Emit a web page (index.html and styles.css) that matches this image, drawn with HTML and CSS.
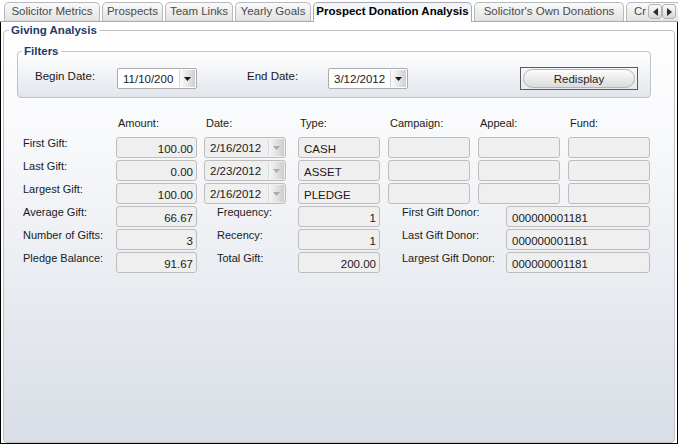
FILE: index.html
```html
<!DOCTYPE html>
<html lang="en">
  <head>
    <meta charset="UTF-8" />
    <meta name="viewport" content="width=device-width, initial-scale=1.0" />
    <title>Prospect Donation Analysis</title>

    <link rel="stylesheet" href="styles.css">
  </head>
  <body>
    <div class="window">
      <div class="tabs">
        <div class="tab t1">Solicitor Metrics</div>
        <div class="tab t2">Prospects</div>
        <div class="tab t3">Team Links</div>
        <div class="tab t4">Yearly Goals</div>
        <div class="tab t5 active">Prospect Donation Analysis</div>
        <div class="tab t6">Solicitor's Own Donations</div>
        <div class="tab t7">Cr</div>
        <div class="scroller">
          <span class="scroll-btn">
            <svg width="5" height="8" viewBox="0 0 5 8"><path d="M5 0V8L0 4Z" fill="#2a2a2a" /></svg>
          </span>
          <span class="scroll-btn">
            <svg width="5" height="8" viewBox="0 0 5 8"><path d="M0 0V8L5 4Z" fill="#2a2a2a" /></svg>
          </span>
        </div>
      </div>

      <div class="panel">
        <fieldset class="group main">
          <legend>Giving Analysis</legend>
          <div class="main-body">
            <fieldset class="group filters">
              <legend>Filters</legend>
              <div class="filter-row">
                <span class="flabel">Begin Date:</span>
                <div class="picker">
                  <span class="picker-text">11/10/200</span>
                  <span class="picker-btn">
                    <svg width="7" height="4" viewBox="0 0 7 4"><path d="M0 0H7L3.5 4Z" fill="#1a1a1a" /></svg>
                  </span>
                </div>
                <span class="flabel end">End Date:</span>
                <div class="picker">
                  <span class="picker-text">3/12/2012</span>
                  <span class="picker-btn">
                    <svg width="7" height="4" viewBox="0 0 7 4"><path d="M0 0H7L3.5 4Z" fill="#1a1a1a" /></svg>
                  </span>
                </div>
                <div class="btn-frame"><button class="btn">Redisplay</button></div>
              </div>
            </fieldset>

            <div class="gifts">
              <div class="row head">
                <span class="c-label"></span>
                <span class="c-amount">Amount:</span>
                <span class="c-date">Date:</span>
                <span class="c-type">Type:</span>
                <span class="c-camp">Campaign:</span>
                <span class="c-appeal">Appeal:</span>
                <span class="c-fund">Fund:</span>
              </div>

              <div class="row">
                <span class="c-label">First Gift:</span>
                <span class="box num c-amount">100.00</span>
                <span class="combo c-date">
                  <span class="combo-text">2/16/2012</span>
                  <span class="combo-btn"><svg width="7" height="4" viewBox="0 0 7 4"><path d="M0 0H7L3.5 4Z" fill="#a9a9a9" /></svg></span>
                </span>
                <span class="box c-type">CASH</span>
                <span class="box c-camp"></span>
                <span class="box c-appeal"></span>
                <span class="box c-fund"></span>
              </div>
              <div class="row">
                <span class="c-label">Last Gift:</span>
                <span class="box num c-amount">0.00</span>
                <span class="combo c-date">
                  <span class="combo-text">2/23/2012</span>
                  <span class="combo-btn"><svg width="7" height="4" viewBox="0 0 7 4"><path d="M0 0H7L3.5 4Z" fill="#a9a9a9" /></svg></span>
                </span>
                <span class="box c-type">ASSET</span>
                <span class="box c-camp"></span>
                <span class="box c-appeal"></span>
                <span class="box c-fund"></span>
              </div>
              <div class="row">
                <span class="c-label">Largest Gift:</span>
                <span class="box num c-amount">100.00</span>
                <span class="combo c-date">
                  <span class="combo-text">2/16/2012</span>
                  <span class="combo-btn"><svg width="7" height="4" viewBox="0 0 7 4"><path d="M0 0H7L3.5 4Z" fill="#a9a9a9" /></svg></span>
                </span>
                <span class="box c-type">PLEDGE</span>
                <span class="box c-camp"></span>
                <span class="box c-appeal"></span>
                <span class="box c-fund"></span>
              </div>

              <div class="row">
                <span class="c-label">Average Gift:</span>
                <span class="box num c-amount">66.67</span>
                <span class="c-sub">Frequency:</span>
                <span class="box num c-freq">1</span>
                <span class="c-donor-label">First Gift Donor:</span>
                <span class="box c-donor">000000001181</span>
              </div>
              <div class="row">
                <span class="c-label">Number of Gifts:</span>
                <span class="box num c-amount">3</span>
                <span class="c-sub">Recency:</span>
                <span class="box num c-freq">1</span>
                <span class="c-donor-label">Last Gift Donor:</span>
                <span class="box c-donor">000000001181</span>
              </div>
              <div class="row">
                <span class="c-label">Pledge Balance:</span>
                <span class="box num c-amount">91.67</span>
                <span class="c-sub">Total Gift:</span>
                <span class="box num c-freq">200.00</span>
                <span class="c-donor-label">Largest Gift Donor:</span>
                <span class="box c-donor">000000001181</span>
              </div>
            </div>
          </div>
        </fieldset>
      </div>
    </div>
  </body>
</html>
```

FILE: styles.css
```css
*,
*::before,
*::after {
  box-sizing: border-box;
  padding: 0;
  margin: 0;
}

body {
  background-color: #ffffff;
  font-family: "Liberation Sans", Arial, sans-serif;
  font-size: 11px;
  color: #1a1a1a;
}

.window {
  width: 678px;
  height: 444px;
  display: flex;
  flex-direction: column;
  overflow: hidden;
}

/* tab strip */
.tabs {
  position: relative;
  height: 22px;
  flex-shrink: 0;
  display: flex;
  align-items: flex-end;
  gap: 2px;
  padding-left: 4px;
  border-bottom: 1px solid #a7abb1;
}
.tab {
  flex-shrink: 0;
  height: 19px;
  line-height: 17px;
  text-align: center;
  white-space: nowrap;
  color: #4b4b4b;
  font-size: 11.5px;
  border: 1px solid #b7b9bd;
  border-bottom: none;
  border-radius: 5px 5px 0 0;
  background: linear-gradient(#fafafa, #e1e1e1);
}
.tab.active {
  height: 20px;
  margin-bottom: -1px;
  color: #000;
  font-weight: bold;
  background: linear-gradient(#f1f4f8, #ffffff);
  border-color: #a7abb1;
}
.t1 { width: 96px; }
.t2 { width: 61px; }
.t3 { width: 68px; }
.t4 { width: 76px; }
.t5 { width: 159px; }
.t6 { width: 150px; }
.t7 { width: 60px; text-align: left; padding-left: 7px; }

.scroller {
  position: absolute;
  top: 4px;
  right: 2px;
  display: flex;
  background: #fff;
}
.scroll-btn {
  width: 14px;
  height: 15px;
  display: flex;
  align-items: center;
  justify-content: center;
  border: 1px solid #b0b2b6;
  border-radius: 3px;
  background: linear-gradient(#fbfbfb, #d6d6d6);
}

/* main panel */
.panel {
  flex: 1;
  display: flex;
  flex-direction: column;
  border: 1px solid #000;
  border-top: none;
  padding: 1px 2px 0 2px;
}

.group {
  border: 1px solid #bfc3c9;
  border-radius: 4px;
  min-width: 0;
}
.group legend {
  font-size: 11.5px;
  font-weight: bold;
  line-height: 14px;
  color: #1c3a6b;
  padding: 0 2px;
}
.main {
  flex: 1;
  padding: 0;
  background: linear-gradient(#ffffff 0%, #f8f9fb 25%, #d9dee6 100%);
}
.main legend {
  margin-left: 5px;
}
.main-body {
  padding-left: 13px;
}

.filters {
  width: 634px;
  margin-top: 7px;
  padding: 10px 0 8px 0;
  background: linear-gradient(#ffffff, #e2e6ec);
}
.filters legend {
  margin-left: 4px;
}
.filter-row {
  display: flex;
  align-items: flex-start;
  height: 21px;
  padding-left: 17px;
}
.flabel {
  width: 82px;
  line-height: 14px;
  padding-top: 1px;
  font-size: 11.5px;
}
.flabel.end {
  width: 81px;
  margin-left: 50px;
}
.picker {
  width: 80px;
  height: 21px;
  display: flex;
  align-items: center;
  background: #fff;
  border: 1px solid #a9abae;
  border-radius: 2px;
}
.picker-text {
  flex: 1;
  padding-left: 5px;
  font-size: 11.5px;
}
.picker-btn {
  width: 16px;
  height: 17px;
  margin-right: 1px;
  display: flex;
  align-items: center;
  justify-content: center;
  border-left: 1px solid #d4d4d4;
  background: linear-gradient(90deg, #fdfdfd, #cfcfcf);
}

.btn-frame {
  width: 118px;
  height: 23px;
  margin-left: 112px;
  margin-top: -1px;
  padding: 1px 2px;
  border: 1px solid #5b5b5b;
}
.btn {
  width: 100%;
  height: 100%;
  font-family: "Liberation Sans", Arial, sans-serif;
  font-size: 11.5px;
  color: #1e1e1e;
  border: 1px solid #b4b4b4;
  border-radius: 10px;
  background: linear-gradient(#fcfcfc, #dcdcdc);
}

/* gift grid */
.gifts {
  padding-left: 6px;
  margin-top: 18px;
}
.row {
  display: flex;
  align-items: flex-start;
  height: 21px;
  margin-bottom: 2px;
}
.row.head {
  height: 14px;
  margin-bottom: 7px;
  line-height: 14px;
}
.row.head span {
  padding-left: 2px;
}
.c-label {
  width: 93px;
  line-height: 12px;
  flex-shrink: 0;
}
.c-amount { width: 81px; }
.c-date { width: 82px; margin-left: 7px; }
.c-type { width: 82px; margin-left: 12px; }
.c-camp,
.c-appeal,
.c-fund { width: 82px; margin-left: 8px; }

.c-sub {
  width: 101px;
  padding-left: 20px;
  line-height: 12px;
}
.c-freq { width: 82px; }
.c-donor-label {
  width: 126px;
  padding-left: 22px;
  line-height: 12px;
}
.c-donor { width: 144px; }

.box {
  height: 21px;
  line-height: 20px;
  padding: 1px 5px 0 5px;
  background: #efefef;
  border: 1px solid #bdbdbd;
  border-radius: 3px;
  font-size: 11.5px;
  white-space: nowrap;
  overflow: hidden;
}
.box.num {
  text-align: right;
  padding-right: 3px;
}

.combo {
  height: 21px;
  display: flex;
  align-items: center;
  background: #efefef;
  border: 1px solid #bdbdbd;
  border-radius: 3px;
}
.combo-text {
  flex: 1;
  padding-left: 5px;
  font-size: 11.5px;
}
.combo-btn {
  width: 16px;
  height: 17px;
  margin-right: 1px;
  display: flex;
  align-items: center;
  justify-content: center;
  border-left: 1px solid #dadada;
  background: linear-gradient(90deg, #f6f6f6, #cdcdcd);
}
```
